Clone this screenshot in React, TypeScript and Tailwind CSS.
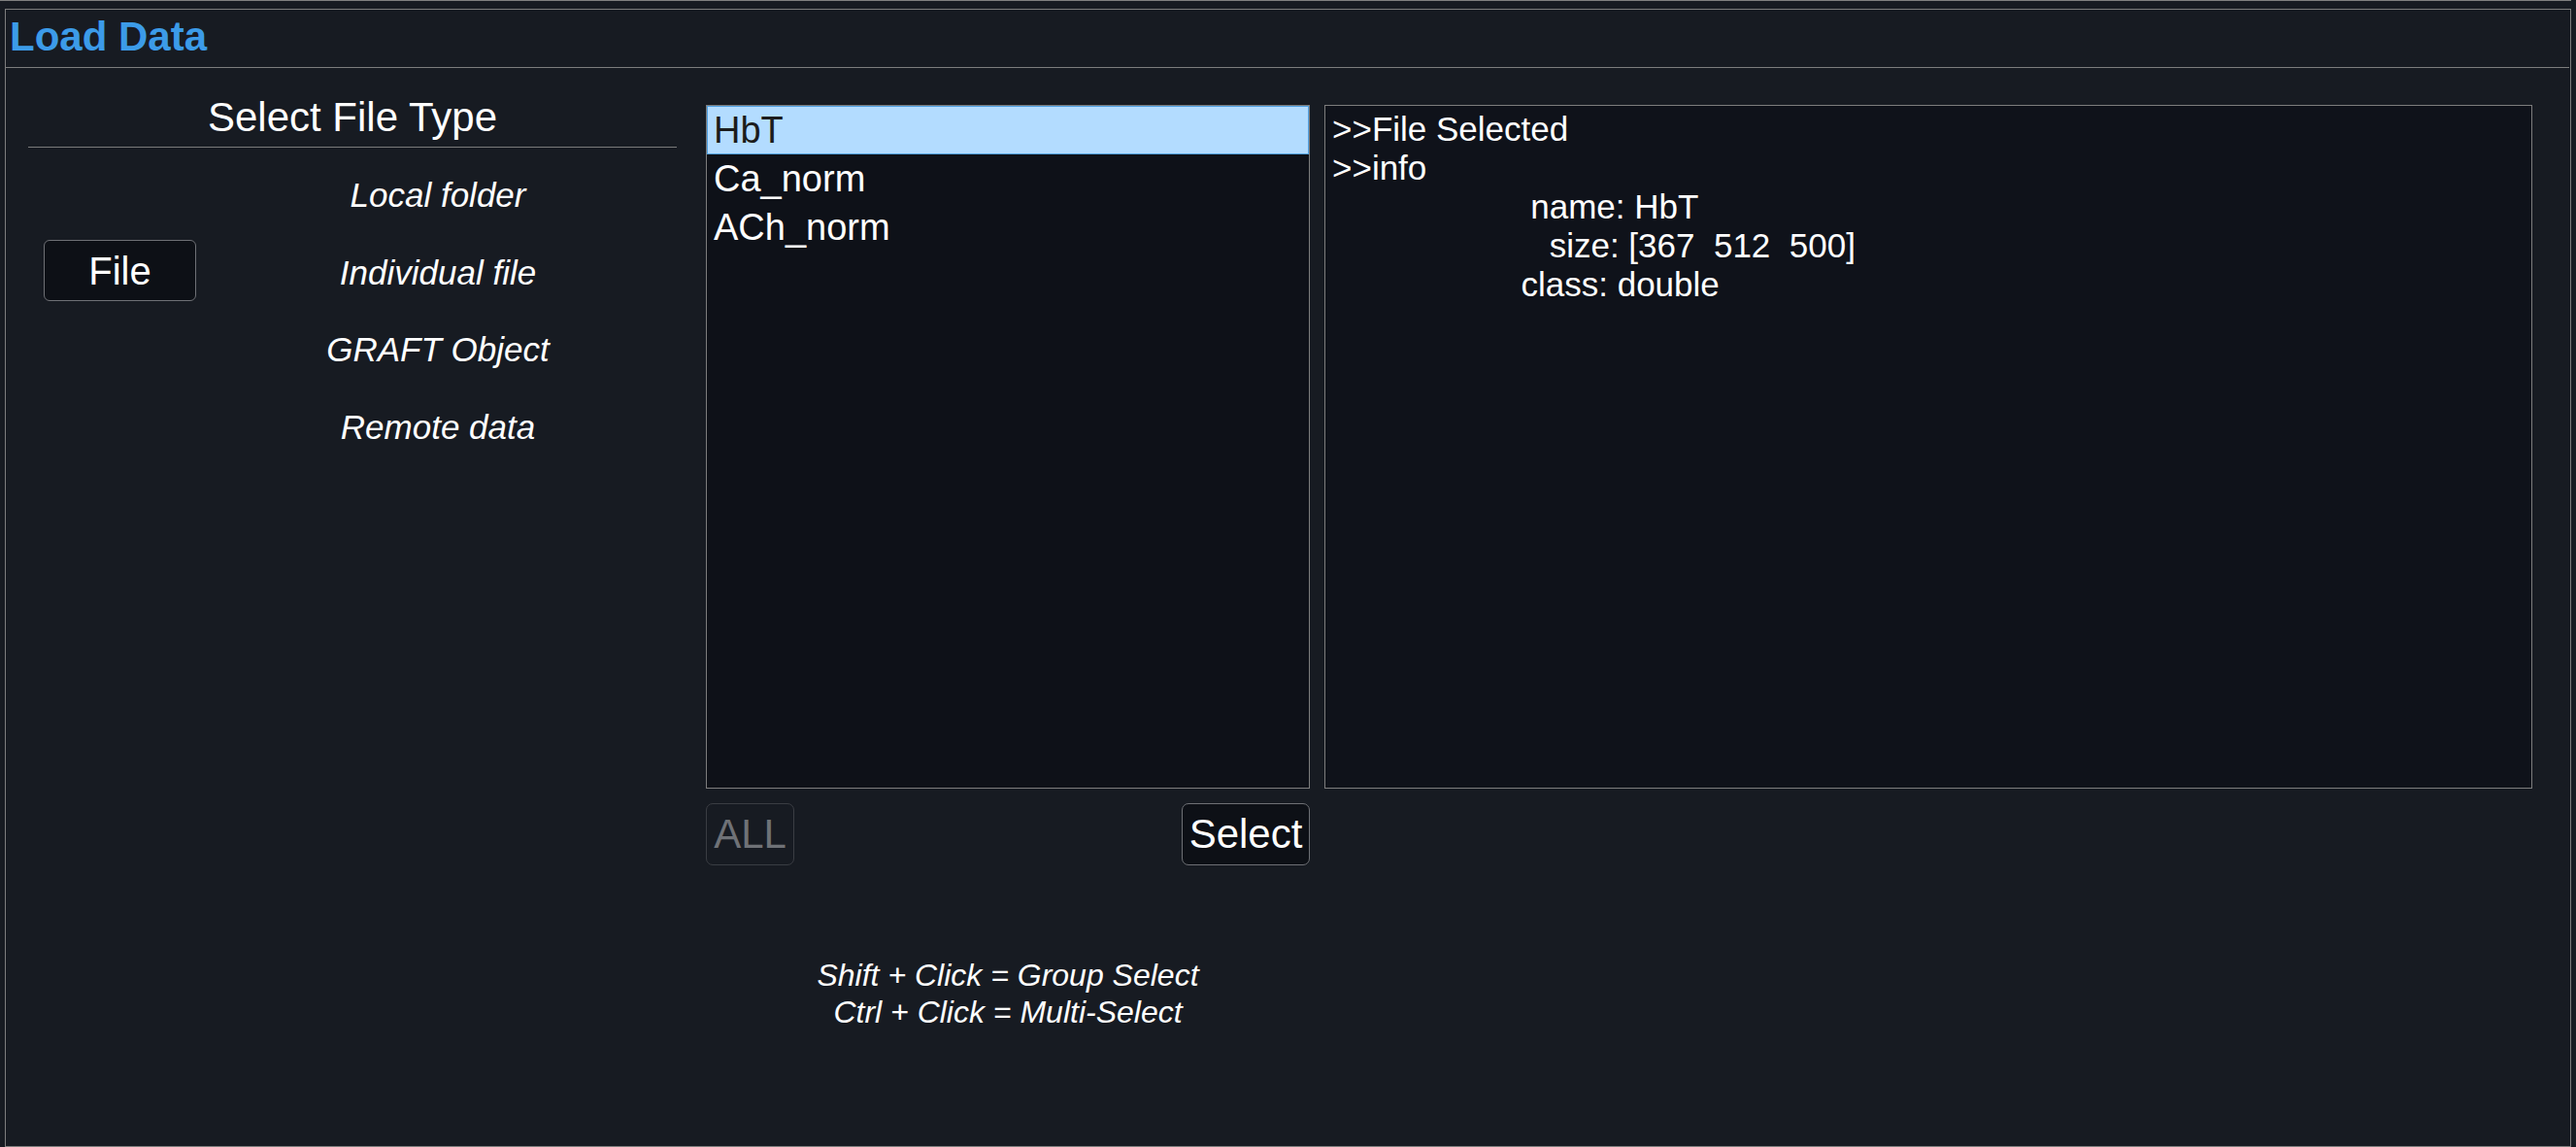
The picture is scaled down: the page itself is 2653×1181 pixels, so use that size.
import { useState } from 'react'

const fileTypes = ['Local folder', 'Individual file', 'GRAFT Object', 'Remote data']
const variables = ['HbT', 'Ca_norm', 'ACh_norm']

export default function App() {
    const [selected, setSelected] = useState('HbT')

    return (
        <div className="w-[2653px] h-[1181px] overflow-hidden bg-[#171b22] text-white font-['Liberation_Sans',Arial,sans-serif]">
            <div className="w-[2648px] h-full border-t border-[#808080] pl-[5px] pt-[8px]">
                {/* Panel */}
                <div className="w-[2643px] h-[1172px] border border-[#7d7d7d] flex flex-col">
                    {/* Header */}
                    <div className="h-[60px] mr-[1px] border-b border-[#7d7d7d] pl-[4px] pt-[7px]">
                        <h1 className="text-[42px] leading-[42px] font-bold text-[#3c9be8]">Load Data</h1>
                    </div>

                    {/* Body */}
                    <div className="flex flex-1 pl-[23px]">
                        {/* Select file type */}
                        <div className="w-[668px] pt-[30px]">
                            <div className="pb-[9px] border-b border-[#7a7a7a] text-center text-[42px] leading-[42px]">
                                Select File Type
                            </div>
                            <div className="flex items-start pl-[16px]">
                                <button className="mt-[95px] w-[157px] h-[63px] rounded-[6px] border border-[#6e7075] bg-[#0d1016] flex items-center justify-center text-[40px] leading-[40px]">
                                    File
                                </button>
                                <div className="ml-[98px] w-[302px] pt-[31px] flex flex-col gap-[44.5px] text-center italic text-[35px] leading-[35px]">
                                    {fileTypes.map(t => (
                                        <span key={t}>{t}</span>
                                    ))}
                                </div>
                            </div>
                        </div>

                        {/* Variable list */}
                        <div className="ml-[30px] w-[622px] pt-[38px] flex flex-col">
                            <div className="h-[704px] border border-[#7d7d7d] bg-[#0e1118]">
                                {variables.map(v => (
                                    <div
                                        key={v}
                                        onClick={() => setSelected(v)}
                                        className={`h-[50px] text-[38px] ${selected === v
                                            ? 'bg-[#b3dcff] text-[#1c1c1c] border border-[#4f9fe0] pl-[6px] leading-[48px]'
                                            : 'text-white pl-[7px] leading-[50px]'
                                            }`}
                                    >
                                        {v}
                                    </div>
                                ))}
                            </div>
                            <div className="mt-[15px] flex justify-between">
                                <button disabled className="w-[91px] h-[64px] rounded-[7px] border border-[#3a3d43] text-[#6f7277] text-[42px] leading-[42px] flex items-center justify-center">
                                    ALL
                                </button>
                                <button className="w-[132px] h-[64px] rounded-[7px] border border-[#6e7075] bg-[#0d1016] text-[42px] leading-[42px] flex items-center justify-center">
                                    Select
                                </button>
                            </div>
                            <div className="mt-[94px] text-center italic text-[32px] leading-[38px]">
                                <p>Shift + Click = Group Select</p>
                                <p>Ctrl + Click = Multi-Select</p>
                            </div>
                        </div>

                        {/* Info */}
                        <div className="ml-[15px] w-[1244px] pt-[38px]">
                            <div className="h-[704px] border border-[#7d7d7d] bg-[#0f121a] pl-[7px] pt-[4px] text-[35px] leading-[40px] whitespace-pre">
                                <div>{'>>File Selected'}</div>
                                <div>{'>>info'}</div>
                                <div>{'                     name: ' + selected}</div>
                                <div>{'                       size: [367  512  500]'}</div>
                                <div>{'                    class: double'}</div>
                            </div>
                        </div>
                    </div>
                </div>
            </div>
        </div>
    )
}
